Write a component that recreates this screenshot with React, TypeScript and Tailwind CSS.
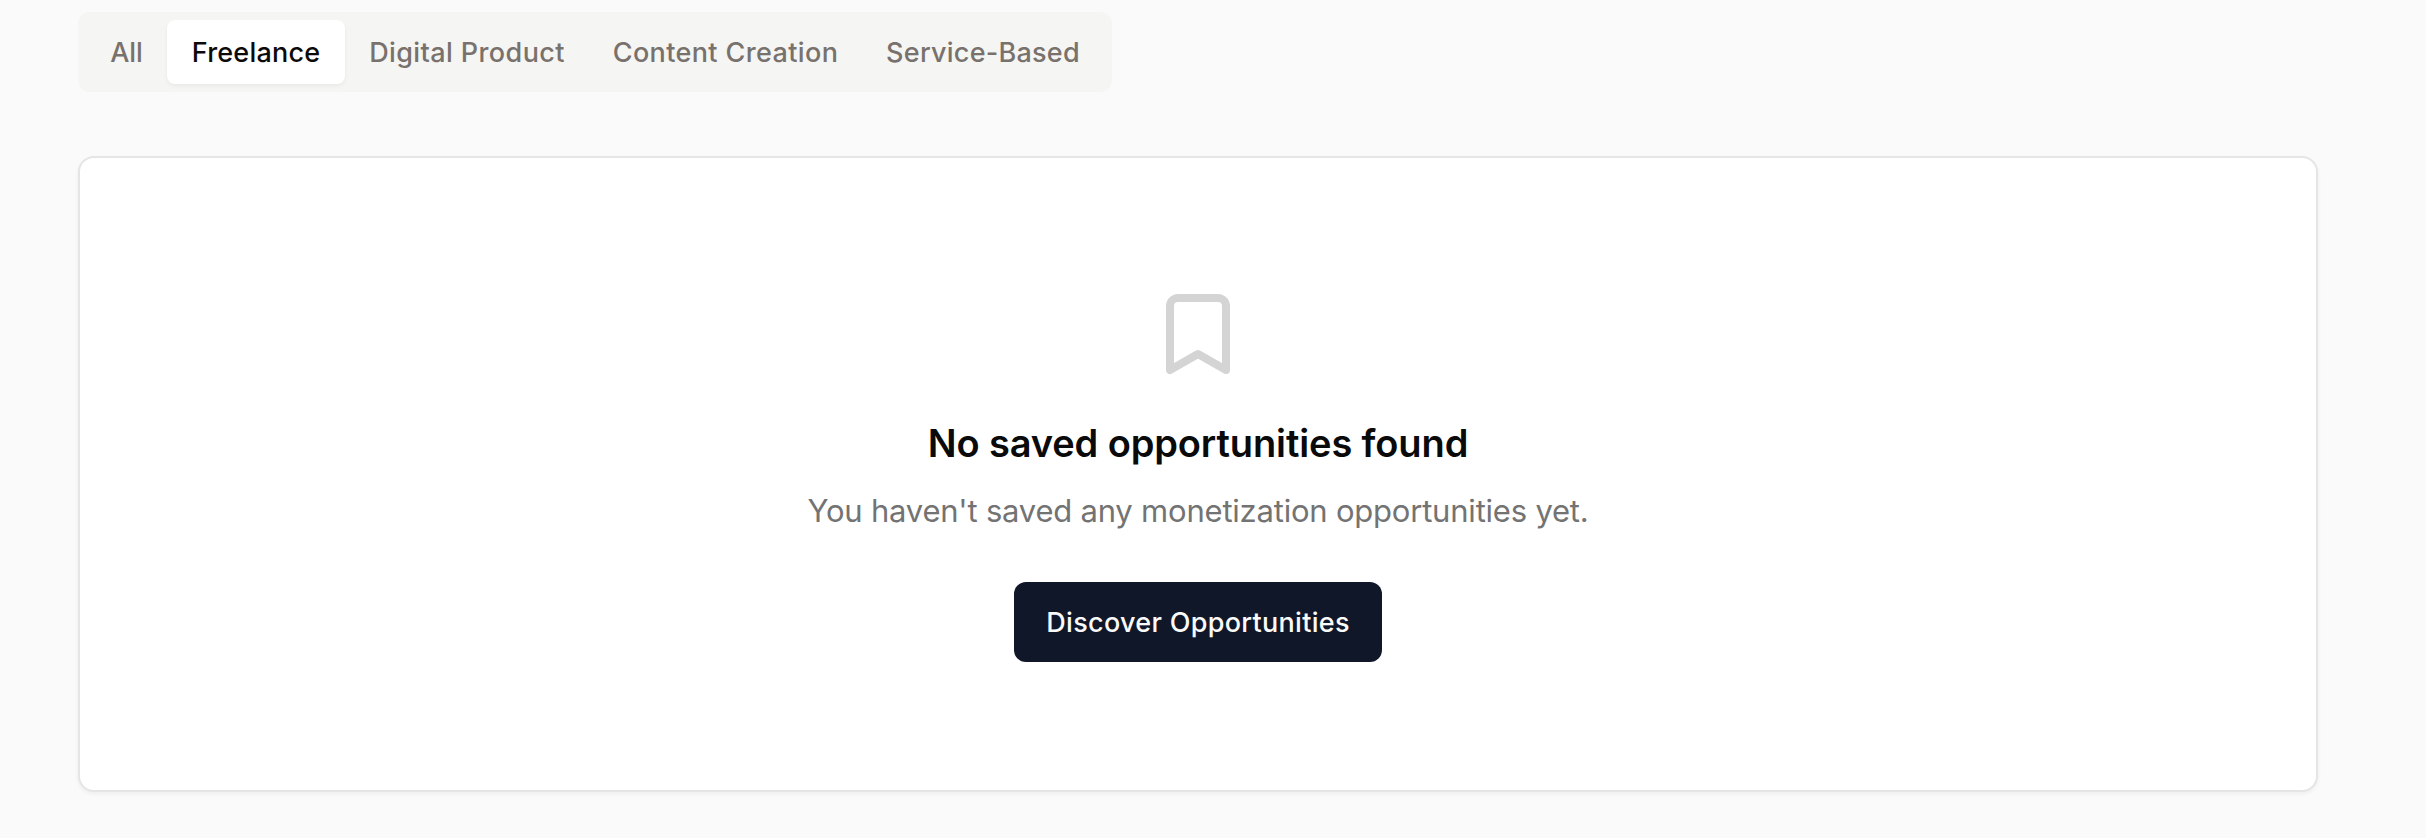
import { Bookmark } from "lucide-react";

const tabs = [
  { label: "All", size: "w-[81px]" },
  { label: "Freelance", size: "w-[178px] tracking-[0.2px]" },
  { label: "Digital Product", size: "w-[244px] tracking-[0.4px]" },
  { label: "Content Creation", size: "w-[273px] tracking-[0.38px]" },
  { label: "Service-Based", size: "w-[242px] tracking-[0.25px]" },
];

export default function App() {
  return (
    <main className="h-[838px] bg-[#fafafa] pt-[12px] pr-[108px] pl-[78px] font-['Inter',sans-serif]">
      <div className="flex h-[80px] w-[1034px] items-center rounded-[12px] bg-[#f5f5f4] px-[8px]">
        {tabs.map((t) => (
          <button
            key={t.label}
            className={`flex h-[64px] shrink-0 items-center justify-center rounded-[8px] pt-px text-[27px] leading-[40px] font-medium whitespace-nowrap ${t.size} ${
              t.label === "Freelance"
                ? "bg-white text-[#0c0a09] shadow-[0_2px_4px_rgba(0,0,0,0.05)]"
                : "text-[#78716c]"
            }`}
          >
            {t.label}
          </button>
        ))}
      </div>
      <section className="mt-[64px] flex h-[636px] flex-col items-center rounded-[16px] border-2 border-[#e5e5e5] bg-white pt-[128px] shadow-[0_2px_4px_rgba(0,0,0,0.05)]">
        <Bookmark className="size-[96px] text-[#d4d4d4]" strokeWidth={2} />
        <h3 className="mt-[33px] text-[38px] leading-[56px] font-semibold tracking-[-0.12px] text-[#0a0a0a]">
          No saved opportunities found
        </h3>
        <p className="mt-[16px] text-[31px] leading-[48px] tracking-[-0.21px] text-[#737373]">
          You haven't saved any monetization opportunities yet.
        </p>
        <button className="mt-[47px] h-[80px] w-[368px] rounded-[12px] bg-[#101729] pt-px text-[27px] leading-[40px] font-medium tracking-[0.3px] text-[#fafafa]">
          Discover Opportunities
        </button>
      </section>
    </main>
  );
}
